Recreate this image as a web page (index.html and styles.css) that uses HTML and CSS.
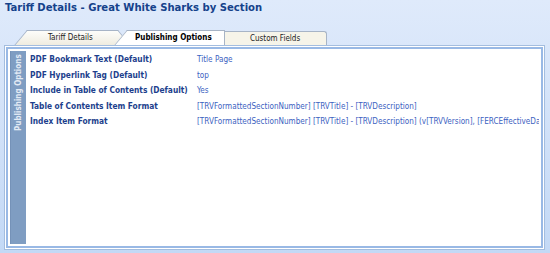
FILE: index.html
```html
<!DOCTYPE html>
<html lang="en">
<head>
    <meta charset="UTF-8">
    <title>Tariff Details</title>
    <link rel="stylesheet" href="styles.css">
</head>
<body>
    <div class="page">
        <h1 class="title">Tariff Details - Great White Sharks by Section</h1>

        <div class="tabs">
            <div class="tab tab-first">Tariff Details</div>
            <div class="tab tab-active">Publishing Options</div>
            <div class="tab tab-last">Custom Fields</div>
        </div>

        <div class="panel">
            <div class="panel-body">
                <div class="side-strip">Publishing Options</div>
                <div class="fields">
                    <div class="field">
                        <div class="field-label">PDF Bookmark Text (Default)</div>
                        <div class="field-value">Title Page</div>
                    </div>
                    <div class="field">
                        <div class="field-label">PDF Hyperlink Tag (Default)</div>
                        <div class="field-value">top</div>
                    </div>
                    <div class="field">
                        <div class="field-label">Include in Table of Contents (Default)</div>
                        <div class="field-value">Yes</div>
                    </div>
                    <div class="field">
                        <div class="field-label">Table of Contents Item Format</div>
                        <div class="field-value">[TRVFormattedSectionNumber] [TRVTitle] - [TRVDescription]</div>
                    </div>
                    <div class="field">
                        <div class="field-label">Index Item Format</div>
                        <div class="field-value">[TRVFormattedSectionNumber] [TRVTitle] - [TRVDescription] (v[TRVVersion], [FERCEffectiveDate])</div>
                    </div>
                </div>
            </div>
        </div>
    </div>
</body>
</html>
```

FILE: styles.css
```css
body {
    margin: 0;
    font-family: "DejaVu Sans Condensed", "Liberation Sans", Arial, sans-serif;
    background: linear-gradient(#dfeafb, #c3d9f6);
    height: 253px;
    overflow: hidden;
}
.page {
    padding: 0 5px 0 4px;
}
.title {
    margin: 0;
    padding-left: 1px;
    font-size: 11.2px;
    line-height: 16px;
    font-weight: bold;
    color: #15428b;
}

/* tab strip */
.tabs {
    display: flex;
    margin: 14px 0 0 23px;
    height: 15px;
}
.tab {
    position: relative;
    z-index: 1;
    height: 15px;
    box-sizing: border-box;
    font-size: 8px;
    line-height: 14px;
    color: #222;
    white-space: nowrap;
    border-top: 1px solid #a7b4c6;
    background: linear-gradient(#fdfdfa, #efece0);
}
.tab-first::before,
.tab-active::before {
    content: "";
    position: absolute;
    top: -1px;
    bottom: 0;
    left: 0;
    width: 20px;
    z-index: -1;
    border-left: 1px solid #a7b4c6;
    border-top: 1px solid #a7b4c6;
    background: inherit;
    transform: skewX(-40deg);
    transform-origin: top left;
}
.tab-first::after {
    content: "";
    position: absolute;
    top: -1px;
    bottom: 0;
    right: 0;
    width: 20px;
    z-index: -1;
    border-right: 1px solid #a7b4c6;
    border-top: 1px solid #a7b4c6;
    background: inherit;
    transform: skewX(40deg);
    transform-origin: top right;
}
.tab-first {
    width: 91px;
    padding-left: 21px;
    box-sizing: border-box;
}
.tab-active {
    z-index: 3;
    width: 98px;
    margin-left: 9px;
    padding-left: 8px;
    font-size: 8px;
    font-weight: bold;
    color: #000;
    background: #fff;
    border-right: 1px solid #a7b4c6;
}
.tab-last {
    width: 102px;
    height: 14px;
    margin-top: 1px;
    padding-left: 25px;
    line-height: 13px;
    border-right: 1px solid #a7b4c6;
    border-top-right-radius: 3px;
    background: #f6f4e9;
}

/* panel */
.panel {
    height: 205px;
    box-sizing: border-box;
    border: 1px solid #a3bddf;
    padding: 1px;
    background: #fff;
}
.panel-body {
    display: flex;
    height: 100%;
    box-sizing: border-box;
    border: 2px solid #99b9e5;
    padding: 2px;
}
.side-strip {
    width: 16px;
    flex: none;
    box-sizing: border-box;
    padding-bottom: 3px;
    background: #7f9dc2;
    border-right: 1px solid #7592b8;
    writing-mode: vertical-rl;
    transform: rotate(180deg);
    text-align: end;
    font-size: 8px;
    line-height: 16px;
    font-weight: bold;
    color: #e2eaf4;
    white-space: nowrap;
}
.fields {
    flex: 1;
    min-width: 0;
    padding: 1px 0 0 4px;
    overflow: hidden;
}
.field {
    display: flex;
    white-space: nowrap;
    line-height: 15.5px;
}
.field-label {
    width: 167px;
    flex: none;
    font-size: 8.3px;
    font-weight: bold;
    color: #1d3f8d;
}
.field-value {
    font-size: 8.1px;
    color: #3b61c1;
}
```
